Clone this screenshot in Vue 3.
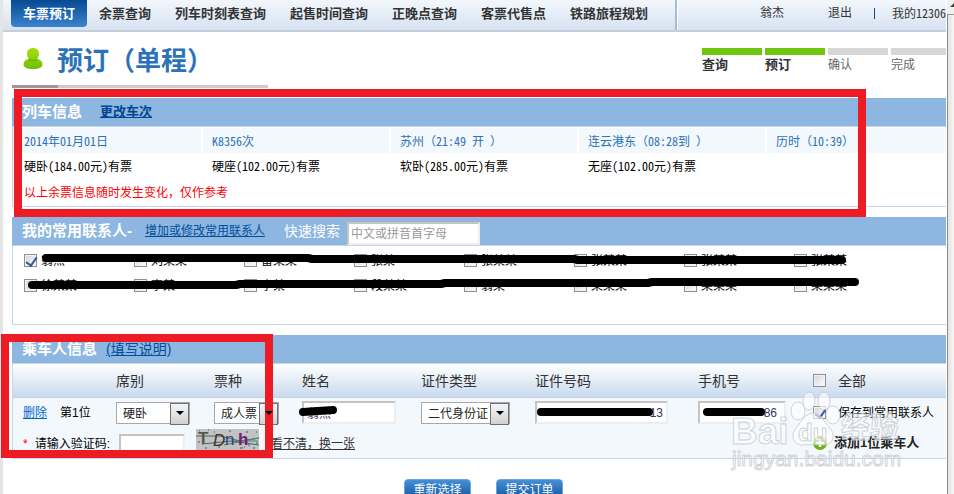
<script setup>
import { ref } from 'vue'

const navItems = ['车票预订', '余票查询', '列车时刻表查询', '起售时间查询', '正晚点查询', '客票代售点', '铁路旅程规划']

const steps = [
  { name: '查询', done: true },
  { name: '预订', done: true },
  { name: '确认', done: false },
  { name: '完成', done: false },
]

const trip = ['2014年01月01日', 'K8356次', '苏州（21:49 开 ）', '连云港东（08:28到 ）', '历时（10:39）']
const seats = ['硬卧(184.00元)有票', '硬座(102.00元)有票', '软卧(285.00元)有票', '无座(102.00元)有票', '']

// Half-width figures apply to ASCII runs only, so full-width brackets keep their width.
const runs = (text) => text.split(/([\x20-\x7e]+)/).filter(Boolean).map((t) => ({ t, half: /^[\x20-\x7e]/.test(t) }))

const contacts = ref([
  { name: '翁杰', checked: true },
  { name: '刘某某', checked: false },
  { name: '雷某某', checked: false },
  { name: '张某', checked: false },
  { name: '张某某', checked: false },
  { name: '张某某', checked: false },
  { name: '张某某', checked: false },
  { name: '张某某', checked: false },
  { name: '徐某某', checked: false },
  { name: '李某', checked: false },
  { name: '李某', checked: false },
  { name: '段某某', checked: false },
  { name: '翁某', checked: false },
  { name: '某某某', checked: false },
  { name: '某某某', checked: false },
  { name: '某某某', checked: false },
])

const keyword = ref('')
const captcha = ref('')
const saveAll = ref(false)
const saveContact = ref(true)
const passenger = ref({ seat: '硬卧', ticket: '成人票', name: '翁杰', idType: '二代身份证', idNo: '*****************13', phone: '*********86' })
</script>

<template>
  <div class="page">
    <div class="content">
      <header class="topbar">
        <nav class="nav">
          <a v-for="(item, i) in navItems" :key="item" href="#" :class="{ active: i === 0 }">{{ item }}</a>
        </nav>
        <div class="account">
          <a href="#" class="user">翁杰</a>
          <a href="#" class="logout">退出</a>
          <i class="bar"></i>
          <a href="#" class="half">我的12306</a>
        </div>
      </header>

      <main>
        <div class="heading">
          <div class="title">
            <svg width="20" height="22" viewBox="0 0 20 22" aria-hidden="true">
              <defs>
                <linearGradient id="userFill" x1="0" y1="0" x2="0" y2="1">
                  <stop offset="0" stop-color="#a6e00c" />
                  <stop offset="1" stop-color="#6fbf06" />
                </linearGradient>
              </defs>
              <path d="M10 0c4 0 6 2.500 6 5.600 0 2.200-.8 4-2 5.200 3.300.7 5.500 2.800 5.500 5.700 0 2.700-3 4.500-9.500 4.500S.5 19.200.5 16.500c0-2.900 2.200-5 5.500-5.700-1.200-1.200-2-3-2-5.200C4 2.500 6 0 10 0z" fill="url(#userFill)" />
              <path d="M5.500 11.300c2.800 1.600 6.200 1.600 9 0" fill="none" stroke="#62aa08" stroke-width="1" />
            </svg>
            <h1>预订（单程）</h1>
          </div>
          <ol class="steps">
            <li v-for="s in steps" :key="s.name" :class="{ done: s.done }">{{ s.name }}</li>
          </ol>
        </div>
        <div class="rule"></div>

        <section class="panel train">
          <div class="panel-head">
            <h2>列车信息</h2>
            <a href="#" class="change">更改车次</a>
          </div>
          <table class="train-table">
            <colgroup>
              <col class="c-first"><col class="c-mid"><col class="c-mid"><col class="c-mid"><col>
            </colgroup>
            <tbody>
              <tr class="trip">
                <td v-for="cell in trip" :key="cell"><span v-for="(r, i) in runs(cell)" :key="i" :class="{ half: r.half }">{{ r.t }}</span></td>
              </tr>
              <tr>
                <td v-for="(cell, n) in seats" :key="n"><span v-for="(r, i) in runs(cell)" :key="i" :class="{ half: r.half }">{{ r.t }}</span></td>
              </tr>
              <tr class="warn"><td colspan="5">以上余票信息随时发生变化，仅作参考</td></tr>
            </tbody>
          </table>
        </section>

        <section class="panel people">
          <div class="panel-head">
            <h2>我的常用联系人-</h2>
            <a href="#" class="manage">增加或修改常用联系人</a>
            <label for="search">快速搜索</label>
            <input id="search" v-model="keyword" type="text" class="field search" placeholder="中文或拼音首字母">
          </div>
          <div class="contacts">
            <label v-for="(c, i) in contacts" :key="i">
              <input v-model="c.checked" type="checkbox">{{ c.name }}
            </label>
          </div>
        </section>

        <section class="panel riders">
          <div class="panel-head">
            <h2>乘车人信息</h2>
            <a href="#" class="help">(填写说明)</a>
          </div>
          <table class="rider-table">
            <colgroup>
              <col class="w-no"><col class="w-seat"><col class="w-type"><col class="w-name"><col class="w-idtype"><col class="w-id"><col class="w-phone"><col>
            </colgroup>
            <thead>
              <tr>
                <th></th><th>席别</th><th>票种</th><th>姓名</th><th>证件类型</th><th>证件号码</th><th>手机号</th>
                <th><label class="save"><input v-model="saveAll" type="checkbox">全部</label></th>
              </tr>
            </thead>
            <tbody>
              <tr>
                <td class="no"><a href="#">删除</a><span>第1位</span></td>
                <td><span class="select s-seat"><select v-model="passenger.seat" aria-label="席别"><option>硬卧</option></select></span></td>
                <td><span class="select s-type"><select v-model="passenger.ticket" aria-label="票种"><option>成人票</option></select></span></td>
                <td><input v-model="passenger.name" class="field f-name" type="text" aria-label="姓名"></td>
                <td><span class="select s-id"><select v-model="passenger.idType" aria-label="证件类型"><option>二代身份证</option></select></span></td>
                <td><input v-model="passenger.idNo" class="field f-id" type="text" aria-label="证件号码"></td>
                <td><input v-model="passenger.phone" class="field f-phone" type="text" aria-label="手机号"></td>
                <td><label class="save"><input v-model="saveContact" type="checkbox">保存到常用联系人</label></td>
              </tr>
              <tr class="verify">
                <td colspan="7">
                  <div class="captcha">
                    <label for="code"><em>*</em>请输入验证码:</label>
                    <input id="code" v-model="captcha" class="field f-code" type="text">
                    <svg class="code-image" width="63" height="21" viewBox="0 0 63 21" role="img" aria-label="验证码">
                      <rect width="63" height="21" fill="#c2c2c2" />
                      <path d="M0 7h24l20 5 19-3M6 15l30-3 27 4" stroke="#3f6679" fill="none" />
                      <path d="M28 16l35-7M38 12h24" stroke="#3f8b62" fill="none" />
                      <path d="M3 2h1M12 1h1M22 18h2M44 19h3M52 16h2M57 19h2M33 2h2M2 13h2M9 19h2M60 3h1M18 3h1M50 3h2M48 18h1M60 14h2" stroke="#555" />
                      <g font-family="Liberation Sans" font-size="17">
                        <text x="2" y="15" fill="#5c563e" font-weight="bold">T</text>
                        <text x="17" y="17" fill="#46321e" font-style="italic">D</text>
                        <text x="29" y="16" fill="#33456e">n</text>
                        <text x="42" y="16" fill="#7a187c" font-weight="bold">h</text>
                      </g>
                    </svg>
                    <a href="#">看不清，换一张</a>
                  </div>
                </td>
                <td>
                  <a href="#" class="add">
                    <svg width="14" height="14" viewBox="0 0 14 14" aria-hidden="true">
                      <circle cx="7" cy="7" r="7" fill="#6db312" />
                      <path d="M7 3v8M3 7h8" stroke="#fff" stroke-width="2.500" />
                    </svg>添加1位乘车人
                  </a>
                </td>
              </tr>
            </tbody>
          </table>
        </section>

        <div class="actions">
          <button type="button">重新选择</button>
          <button type="button">提交订单</button>
        </div>
      </main>
    </div>

    <div class="scroller">
      <div class="scroll-up"><svg width="6" height="8" viewBox="0 0 6 8" aria-hidden="true"><path d="M2 7l4-4v4z" fill="#444" /></svg></div>
    </div>

    <svg class="marks" width="954" height="494" viewBox="0 0 954 494" aria-hidden="true">
      <g fill="none" stroke="#000" stroke-width="8" stroke-linecap="round" stroke-linejoin="round">
        <path d="M46 258H308L312 259H574L578 260H842" />
        <path d="M32 285H236L240 284H441L445 283H648L652 282H855" />
        <path d="M303 412L333 410" />
        <path d="M541 412H649" />
        <path d="M707 412H761" />
      </g>
      <g class="watermark">
        <ellipse cx="798" cy="411" rx="7" ry="9" />
        <ellipse cx="809" cy="401" rx="6" ry="9" />
        <ellipse cx="824" cy="401" rx="6" ry="9" />
        <ellipse cx="833" cy="415" rx="7" ry="9" />
        <path d="M814 413c7 0 9 8 15 14 7 7 5 17-5 18-6 0-14-1-20 0-11 1-14-10-8-17 6-7 9-15 18-15z" />
        <g font-family="Liberation Sans" font-weight="bold">
          <text x="731" y="444" font-size="37">Bai</text>
          <text x="798" y="441" font-size="24">du</text>
        </g>
        <text x="732" y="466" font-size="21" font-family="Liberation Sans">jingyan.baidu.com</text>
        <text x="841" y="438" font-size="29" font-family="Noto Sans CJK SC" font-weight="bold">经验</text>
      </g>
      <g fill="none" stroke="#ed1c24" stroke-width="8">
        <rect x="18" y="93" width="844" height="120" />
        <rect x="5" y="338" width="264" height="116" />
      </g>
    </svg>
  </div>
</template>

<style>
body { background: #fff; overflow: hidden; }
</style>

<style scoped>
* { box-sizing: border-box; }
.page {
  position: relative;
  display: flex;
  height: 100vh;
  overflow: hidden;
  padding-left: 3px;
  background: linear-gradient(90deg, #e5e5e5 3px, #fff 3px);
  font: 12px/16px "Liberation Sans", "Noto Sans CJK SC", sans-serif;
  color: #333;
}
h1, h2, ol { margin: 0; padding: 0; }
a { color: inherit; text-decoration: none; }
.content { flex: 1; min-width: 0; overflow: hidden; }
.topbar {
  display: flex;
  height: 32px;
  padding-left: 8px;
  border-bottom: 2px solid #c5ced9;
  background: linear-gradient(#f3f7fc, #d6e2f2);
  white-space: nowrap;
}
.nav { display: flex; flex: none; width: 666px; border-right: 2px solid #a5bdd3; }
.nav a { height: 27px; padding: 0 12px; font-size: 13px; line-height: 27px; font-weight: bold; }
.nav .active { border-radius: 0 0 4px 4px; background: linear-gradient(#064a92, #3c83cf); color: #fff; }
.account { display: flex; flex: 1; align-items: center; min-width: 0; padding: 0 0 4px 82px; border-left: 1px solid #fff; }
.user { margin-right: 44px; }
.logout { margin-right: 22px; }
.bar { flex: none; width: 1px; height: 11px; margin-right: 17px; background: #0b4c91; }
main { padding-left: 9px; }
.heading { display: flex; justify-content: space-between; height: 53px; padding: 16px 0 0 11px; }
.title { display: flex; gap: 14px; }
h1 { font-size: 26px; line-height: 26px; color: #2b72b9; white-space: nowrap; }
.steps { display: flex; flex: none; gap: 3px; width: 244px; list-style: none; }
.steps li { flex: none; width: 60px; padding-top: 2px; border-top: 7px solid #d7d7d7; color: #666; }
.steps .done { border-color: #70c50e; color: #333; font-size: 13px; font-weight: bold; }
.rule { width: 256px; height: 3px; border-left: 46px solid #999; background: #ccc; }
.panel { border: 1px solid #c3d5ea; border-width: 0 0 1px 1px; }
.panel-head {
  display: flex;
  align-items: center;
  height: 29px;
  margin-left: -1px;
  padding-left: 10px;
  border-bottom: 1px solid #c3d5ea;
  background: #8db6e1;
  color: #fff;
}
h2 { font-size: 15px; line-height: 20px; }
.panel-head a { text-decoration: underline; color: #014f9c; }
.panel-head .change { margin-left: 18px; font-size: 13px; font-weight: bold; color: #014690; }
.train { margin-top: 10px; }
table { width: 100%; table-layout: fixed; border-spacing: 0; border-collapse: separate; }
td, th { padding: 0; text-align: left; font-weight: normal; white-space: nowrap; }
.c-first { width: 190px; }
.c-mid { width: 188px; }
.train-table { padding: 1px 0; color: #000; font-family: "Noto Sans CJK SC", sans-serif; }
.train-table td { height: 26px; padding-left: 9px; }
.train-table td:first-child { padding-left: 11px; }
.train-table span { white-space: pre; }
.half { font-family: "Noto Sans CJK SC", sans-serif; font-feature-settings: "hwid"; }
.train-table .trip td { height: 25px; border-right: 2px solid #fff; background: #f3f8fd; color: #2b72b9; }
.train-table .trip td:last-child { border-right: 0; }
.train-table .warn td { color: #f00; }
.people { margin-top: 10px; }
.manage { margin-left: 13px; }
.people .panel-head label { margin-left: 19px; font-size: 14px; }
.field {
  display: block;
  height: 23px;
  padding: 0 3px;
  border: 2px solid;
  border-color: #c4c4c4 #eee #eee #c4c4c4;
  border-radius: 0;
  background: #fff;
  color: #336;
  font: inherit;
}
.search { width: 133px; margin: 5px 0 0 7px; padding: 0 2px; }
.search::placeholder { color: #999; }
.contacts { display: grid; grid-template-columns: repeat(8, 110px); grid-auto-rows: 25px; height: 78px; padding: 2px 0 0 11px; color: #000; }
.contacts label { display: flex; align-items: center; gap: 4px; white-space: nowrap; }
input[type="checkbox"] {
  appearance: none;
  flex: none;
  width: 13px;
  height: 13px;
  margin: 0;
  border: 1px solid #8e8f8f;
  background: linear-gradient(135deg, #cfd3d8, #fff);
  box-shadow: inset 0 0 0 1px #f4f4f4;
}
input[type="checkbox"]:checked::after {
  content: "";
  display: block;
  width: 5px;
  height: 9px;
  margin-left: 3px;
  border: solid #3c56a0;
  border-width: 0 2px 2px 0;
  transform: rotate(35deg);
}
.riders { margin-top: 10px; }
.help { margin-left: 9px; font-size: 14px; }
.w-no { width: 103px; }
.w-seat { width: 98px; }
.w-type { width: 88px; }
.w-name { width: 119px; }
.w-idtype { width: 114px; }
.w-id { width: 163px; }
.w-phone { width: 115px; }
th { height: 34px; border-bottom: 1px solid #c0d2e8; background: linear-gradient(#fff, #c9daee); font-size: 14px; }
.rider-table td { height: 29px; background: #f3f8fd; color: #000; }
.rider-table .verify td { height: 31px; }
.rider-table .no { padding-left: 10px; }
.no a { margin-right: 13px; color: #06c; text-decoration: underline; }
.select { position: relative; display: block; height: 22px; border: 1px solid #a5a8b2; background: #fff; }
.select::after {
  content: "";
  position: absolute;
  top: 0;
  right: 0;
  width: 17px;
  height: 20px;
  border: 1px solid #707070;
  background: linear-gradient(#f5f5f5, #d2d2d2);
  pointer-events: none;
}
.select::before {
  content: "";
  position: absolute;
  z-index: 1;
  top: 8px;
  right: 5px;
  border: solid transparent;
  border-width: 4px 4px 0;
  border-top-color: #000;
  pointer-events: none;
}
.select select { appearance: none; width: 100%; height: 20px; padding: 2px 0 0 6px; border: 0; border-radius: 0; background: transparent; color: #222; font: inherit; }
.s-seat { width: 74px; }
.s-type { width: 65px; }
.s-id { width: 89px; }
.f-name { width: 94px; }
.f-id { width: 133px; text-align: right; }
.f-phone { width: 88px; padding-right: 7px; text-align: right; }
.save { display: flex; align-items: center; gap: 12px; }
.captcha { display: flex; align-items: center; padding: 2px 0 0 10px; }
.captcha em { margin-right: 7px; color: #f00; font-style: normal; }
.captcha label { width: 96px; }
.f-code { width: 66px; margin-top: 3px; }
.code-image { margin: 0 12px 8px 11px; }
.captcha a { color: #333; text-decoration: underline; }
.add { display: flex; align-items: center; gap: 7px; font-size: 13px; font-weight: bold; color: #222; }
.actions { display: flex; gap: 25px; padding: 20px 0 0 392px; }
.actions button {
  width: 67px;
  height: 22px;
  padding: 0;
  border: 1px solid #6ba3da;
  border-radius: 4px;
  background: linear-gradient(#4590d8, #0f5099);
  color: #fff;
  font: inherit;
}
.scroller { flex: none; width: 8px; border-left: 1px solid #fff; background: linear-gradient(90deg, #8f8f8f 1px, #e3e3e3 1px, #f5f5f5); }
.scroll-up { display: flex; justify-content: flex-end; height: 15px; border-bottom: 1px solid #999; background: #f0f0f0; }
.marks { position: absolute; top: 0; left: 0; pointer-events: none; }
.watermark { fill: #fff; fill-opacity: 0.6; stroke: #c4c8ce; stroke-opacity: 0.8; stroke-width: 1; }
</style>
